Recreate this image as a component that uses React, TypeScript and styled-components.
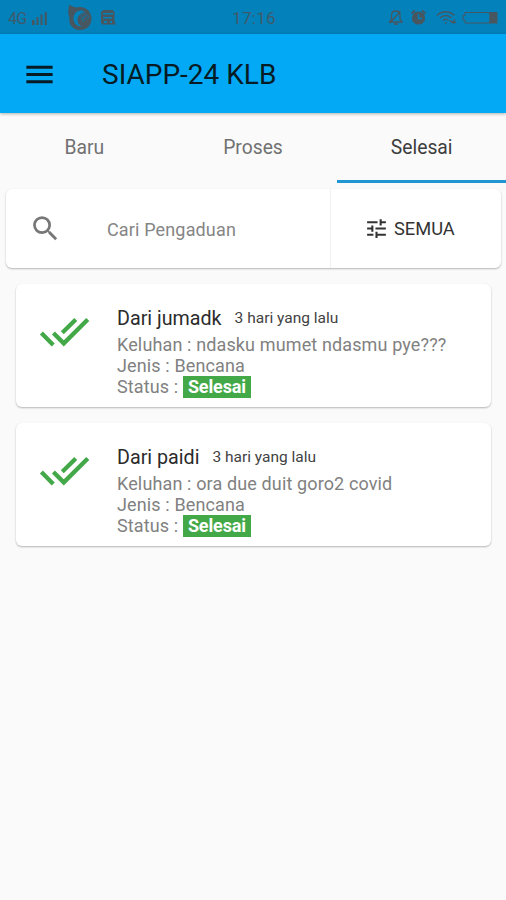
import React from 'react';
import styled, { createGlobalStyle } from 'styled-components';

const GlobalStyle = createGlobalStyle`
  * { box-sizing: border-box; }
  body { margin: 0; background: #fafafa; font-family: Roboto, "Liberation Sans", sans-serif; }
  svg { display: block; flex: none; }
`;

const Screen = styled.main`
  width: 506px;
  height: 900px;
  overflow: hidden;
  background: #fafafa;
  display: flex;
  flex-direction: column;
`;

const StatusBar = styled.div`
  height: 34px;
  flex: none;
  background: #0281bb;
  color: #3f5b6b;
  display: grid;
  grid-template-columns: 1fr auto 1fr;
  align-items: center;
  padding: 2px 6px 0 8px;
`;

const StatusGroup = styled.div<{ $end?: boolean }>`
  display: flex;
  align-items: center;
  justify-content: ${(p) => (p.$end ? 'flex-end' : 'flex-start')};
`;

const Network = styled.span`
  font-size: 16px;
  letter-spacing: -0.8px;
  width: 24px;
`;

const Clock = styled.time`
  font-size: 17px;
  letter-spacing: 0.3px;
`;

const AppBar = styled.header`
  height: 79px;
  flex: none;
  background: #03a9f4;
  display: flex;
  align-items: center;
  padding: 1px 0 0 22px;
  gap: 45px;
  box-shadow: 0 1px 3px rgba(0, 0, 0, 0.3);
`;

const Title = styled.h1`
  margin: 0;
  font-size: 28px;
  font-weight: 400;
  color: #071b25;
`;

const Tabs = styled.nav`
  height: 70px;
  flex: none;
  display: grid;
  grid-template-columns: repeat(3, 1fr);
`;

const Tab = styled.button<{ $active?: boolean }>`
  border: 0;
  border-bottom: 3px solid ${(p) => (p.$active ? '#2196d3' : 'transparent')};
  background: none;
  padding: 2px 0 0;
  font: 400 19.3px Roboto, sans-serif;
  color: ${(p) => (p.$active ? '#3d3d3d' : '#717171')};
`;

const surface = `
  background: #fff;
  border-radius: 6px;
  box-shadow: 0 1px 2px rgba(0, 0, 0, 0.28);
`;

const SearchPanel = styled.section`
  ${surface}
  height: 79px;
  flex: none;
  margin: 6px 5px 0 6px;
  display: flex;
`;

const SearchField = styled.label`
  width: 325px;
  display: flex;
  align-items: center;
  padding-left: 23px;
  gap: 45px;
  border-right: 1px solid #f0f0f0;
`;

const SearchInput = styled.input`
  border: 0;
  outline: 0;
  padding: 2px 0 0;
  width: 200px;
  background: none;
  font: 400 18px Roboto, sans-serif;
  letter-spacing: 0.15px;
  &::placeholder { color: #858585; opacity: 1; }
`;

const FilterButton = styled.button`
  flex: 1;
  border: 0;
  background: none;
  display: flex;
  align-items: center;
  padding: 0 0 0 33px;
  gap: 5px;
  font: 400 18.3px Roboto, sans-serif;
  color: #333;
`;

const ReportList = styled.section`
  display: flex;
  flex-direction: column;
  gap: 16px;
  margin: 16px 15px 0 16px;
`;

const ReportCard = styled.article`
  ${surface}
  height: 123px;
  display: flex;
  padding: 22px 0 0 23px;
  gap: 27px;
`;

const ReportHeading = styled.div`
  display: flex;
  align-items: flex-start;
  gap: 13px;
  height: 28px;
`;

const Sender = styled.h2`
  margin: 0;
  font-size: 19.7px;
  line-height: 25px;
  font-weight: 400;
  color: #2b2b2b;
`;

const Age = styled.span`
  font-size: 15.5px;
  line-height: 24px;
  color: #424242;
`;

const Detail = styled.p`
  margin: 0;
  font-size: 18px;
  line-height: 21.2px;
  letter-spacing: 0.13px;
  color: #818181;
`;

const StatusLabel = styled.span`
  display: inline-block;
  background: #43a847;
  color: #fff;
  font-weight: 700;
  letter-spacing: -0.15px;
  padding: 0 5px;
`;

const MaterialIcon = ({ size, color, d }: { size: number; color: string; d: string }) => (
  <svg width={size} height={size} viewBox="0 0 24 24" fill={color} aria-hidden="true">
    <path d={d} />
  </svg>
);

const icons = {
  menu: 'M3 18h18v-2H3v2zm0-5h18v-2H3v2zm0-7v2h18V6H3z',
  search:
    'M15.5 14h-.79l-.28-.27A6.47 6.47 0 0 0 16 9.5 6.5 6.5 0 1 0 9.5 16c1.61 0 3.09-.59 4.23-1.57l.27.28v.79l5 4.99L20.49 19l-4.99-5zm-6 0C7.01 14 5 11.99 5 9.5S7.01 5 9.5 5 14 7.01 14 9.5 11.99 14 9.5 14z',
  tune: 'M3 17v2h6v-2H3zM3 5v2h10V5H3zm10 16v-2h8v-2h-8v-2h-2v6h2zM7 9v2H3v2h4v2h2V9H7zm14 4v-2H11v2h10zm-6-4h2V7h4V5h-4V3h-2v6z',
  doneAll:
    'M18 7l-1.41-1.41-6.34 6.34 1.41 1.41L18 7zm4.24-1.41L11.66 16.17 7.48 12l-1.41 1.41L11.66 19l12-12-1.42-1.41zM.41 13.41L6 19l1.41-1.41L1.83 12 .41 13.41z',
};

const SystemIconsLeft = () => (
  <svg width="86" height="30" viewBox="32 3 86 30" fill="#485660" aria-hidden="true">
    <path d="M32 20h2.500v5h-2.500zM36.500 17h2v8h-2zM40.500 14.500h2V25h-2zM44.800 12h2v13h-2z" />
    <path
      fillRule="evenodd"
      d="M69 5l7 2.500c8-2.500 15.500 3 15.500 11 0 7-5 11.500-11.500 11.500-7 0-12-6-10.500-12.500C67.500 13 68.500 9 69 5zm12.500 5.500c-5 0-8 3.500-8 8s3.500 8.500 8.500 8c-3-1.500-4.500-3.500-4.500-6.500 0-4 2.500-6 7-8.500-1-.7-2-1-3-1z"
    />
    <path d="M81 15.500l2.500-3 2 1.500-3 5 5-4 1.500 2-6 5z" stroke="#0281bb" strokeWidth="0.600" />
    <path
      fillRule="evenodd"
      d="M103.500 10h9l2 2v9l1.500 3.500h-13.500L101 23V12zM103 13v1.500h10V13zm0 4v1.500h9V17zm1 4v2h3v-2zm6 0v2h2v-2z"
    />
  </svg>
);

const SystemIconsRight = () => (
  <svg width="114" height="30" viewBox="386 3 114 30" fill="none" stroke="#485660" aria-hidden="true">
    <path d="M389.500 22h12.500l-2-3v-3.500c0-3-1.500-4.500-4.200-4.500s-4.300 1.500-4.300 4.500V19zM394 24h4M390 23l10.500-12" strokeWidth="1.300" />
    <circle cx="418.500" cy="18" r="6.600" fill="#485660" stroke="none" />
    <path d="M411.500 13.500l3.500-3M422 10.500l3.500 3" strokeWidth="1.800" />
    <path d="M418.500 14v4.500h3.500" stroke="#0281bb" strokeWidth="1.400" />
    <path d="M437 15.500c5-5 12.500-5 17.500 0M440 18c4-3.500 7.500-3.500 11.500 0M443 20.500c2-2 3.500-2 5.500 0M445.700 22v2M450 20.500l2 2 3-3M452 22.500h4" strokeWidth="1.300" />
    <path d="M465 12.500h25v10.500h-25v-3h-2v-4.500h2z" strokeWidth="1" />
    <path d="M489.500 12h8v11.500h-8z" fill="#485660" stroke="none" />
  </svg>
);

const reports = [
  { sender: 'jumadk', age: '3 hari yang lalu', complaint: 'ndasku mumet ndasmu pye???', kind: 'Bencana', status: 'Selesai' },
  { sender: 'paidi', age: '3 hari yang lalu', complaint: 'ora due duit goro2 covid', kind: 'Bencana', status: 'Selesai' },
];

export default function App() {
  return (
    <Screen>
      <GlobalStyle />
      <StatusBar>
        <StatusGroup>
          <Network>4G</Network>
          <SystemIconsLeft />
        </StatusGroup>
        <Clock>17:16</Clock>
        <StatusGroup $end>
          <SystemIconsRight />
        </StatusGroup>
      </StatusBar>
      <AppBar>
        <MaterialIcon size={35} color="#071b25" d={icons.menu} />
        <Title>SIAPP-24 KLB</Title>
      </AppBar>
      <Tabs>
        <Tab>Baru</Tab>
        <Tab>Proses</Tab>
        <Tab $active>Selesai</Tab>
      </Tabs>
      <SearchPanel>
        <SearchField>
          <MaterialIcon size={33} color="#777" d={icons.search} />
          <SearchInput placeholder="Cari Pengaduan" />
        </SearchField>
        <FilterButton>
          <MaterialIcon size={25} color="#333" d={icons.tune} />
          SEMUA
        </FilterButton>
      </SearchPanel>
      <ReportList>
        {reports.map((r) => (
          <ReportCard key={r.sender}>
            <MaterialIcon size={51} color="#43a847" d={icons.doneAll} />
            <div>
              <ReportHeading>
                <Sender>Dari {r.sender}</Sender>
                <Age>{r.age}</Age>
              </ReportHeading>
              <Detail>Keluhan : {r.complaint}</Detail>
              <Detail>Jenis : {r.kind}</Detail>
              <Detail>
                Status : <StatusLabel>{r.status}</StatusLabel>
              </Detail>
            </div>
          </ReportCard>
        ))}
      </ReportList>
    </Screen>
  );
}
